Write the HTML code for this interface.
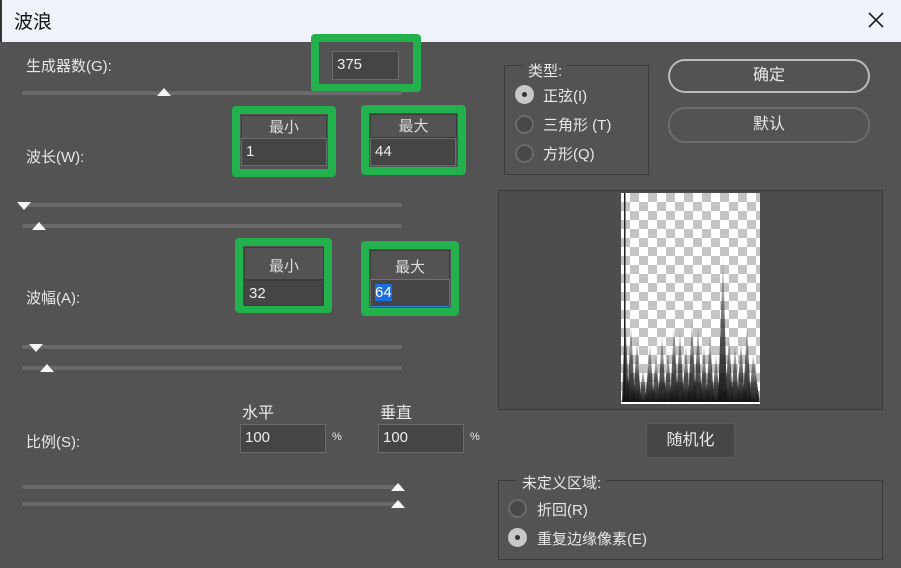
<!DOCTYPE html>
<html><head><meta charset="utf-8"><style>
*{margin:0;padding:0;box-sizing:border-box}
body{width:901px;height:568px;background:#535353;font-family:"Liberation Sans","Noto Sans CJK SC",sans-serif;color:#e8e8e8;font-size:15px;position:relative;overflow:hidden}
.a{position:absolute}
.tb{left:0;top:0;width:901px;height:42px;background:#eff3f9;border-left:2px solid #333}
.g{position:absolute;border:8px solid #22b14c;border-radius:4px}
.in{position:absolute;background:#454545;border:1px solid #6a6a6a;color:#eee;font-size:15px;padding-left:4px;line-height:26px}
.hd{position:absolute;background:#535353;border:1px solid #3c3c3c;text-align:center;font-size:15px;color:#ddd}
.tr{position:absolute;height:4px;background:#6a6a6a;border-radius:2px}
.up{position:absolute;width:0;height:0;border-left:7px solid transparent;border-right:7px solid transparent;border-bottom:8px solid #f5f5f5}
.dn{position:absolute;width:0;height:0;border-left:7px solid transparent;border-right:7px solid transparent;border-top:8px solid #f5f5f5}
.r{position:absolute;width:19px;height:19px;border-radius:50%;background:#484848;border:2px solid #6a6a6a}
.r.on{background:#c8c8c8;border:none}
.r.on:after{content:"";position:absolute;left:7px;top:7px;width:5px;height:5px;border-radius:50%;background:#333}
.box{position:absolute;border:1px solid #3a3a3a}
.btn{position:absolute;border:2px solid #aaa;border-radius:17px;text-align:center;font-size:16px}
</style></head><body>
<div class="a tb"></div>
<div class="a" style="left:14px;top:7px;color:#111;font-size:19px">波浪</div>
<svg class="a" style="left:867px;top:11px" width="18" height="18"><path d="M2 2L16 16M16 2L2 16" stroke="#222" stroke-width="1.6"/></svg>

<div class="a" style="left:26px;top:55px">生成器数(G):</div>
<div class="g" style="left:311px;top:34px;width:110px;height:58px"></div>
<div class="in" style="left:332px;top:51px;width:67px;height:29px">375</div>
<div class="tr" style="left:22px;top:91px;width:380px"></div><div class="up" style="left:157px;top:88px"></div>

<div class="a" style="left:26px;top:146px">波长(W):</div>
<div class="g" style="left:232px;top:106px;width:104px;height:71px"></div>
<div class="hd" style="left:241px;top:115px;width:86px;height:24px">最小</div>
<div class="in" style="left:241px;top:138px;width:86px;height:28px">1</div>
<div class="g" style="left:361px;top:105px;width:105px;height:70px"></div>
<div class="hd" style="left:370px;top:114px;width:87px;height:24px">最大</div>
<div class="in" style="left:370px;top:138px;width:86px;height:28px">44</div>
<div class="tr" style="left:22px;top:203px;width:380px"></div><div class="dn" style="left:17px;top:202px"></div>
<div class="tr" style="left:22px;top:224px;width:380px"></div><div class="up" style="left:32px;top:222px"></div>

<div class="a" style="left:26px;top:287px">波幅(A):</div>
<div class="g" style="left:235px;top:238px;width:97px;height:75px"></div>
<div class="hd" style="left:244px;top:247px;width:80px;height:33px;line-height:38px">最小</div>
<div class="in" style="left:244px;top:280px;width:80px;height:26px;border-color:#3c3c3c">32</div>
<div class="g" style="left:361px;top:241px;width:98px;height:75px"></div>
<div class="hd" style="left:370px;top:250px;width:80px;height:30px;line-height:34px">最大</div>
<div class="in" style="left:370px;top:279px;width:80px;height:28px;border-top:1px solid #2a7fd6;border-bottom:1px solid #2a7fd6"><span style="background:#1a6fe0;color:#fff">64</span></div>
<div class="tr" style="left:22px;top:345px;width:380px"></div><div class="dn" style="left:29px;top:344px"></div>
<div class="tr" style="left:22px;top:366px;width:380px"></div><div class="up" style="left:40px;top:364px"></div>

<div class="a" style="left:242px;top:399px;font-size:16px">水平</div>
<div class="a" style="left:380px;top:399px;font-size:16px">垂直</div>
<div class="a" style="left:26px;top:431px">比例(S):</div>
<div class="in" style="left:240px;top:424px;width:86px;height:29px">100</div>
<div class="a" style="left:332px;top:431px;font-size:11px">%</div>
<div class="in" style="left:378px;top:424px;width:86px;height:29px">100</div>
<div class="a" style="left:470px;top:431px;font-size:11px">%</div>
<div class="tr" style="left:22px;top:485px;width:380px"></div><div class="up" style="left:391px;top:483px"></div>
<div class="tr" style="left:22px;top:502px;width:380px"></div><div class="up" style="left:391px;top:500px"></div>

<div class="box" style="left:504px;top:65px;width:145px;height:110px"></div>
<div class="a" style="left:523px;top:60px;background:#535353;padding:0 5px">类型:</div>
<div class="r on" style="left:515px;top:85px"></div><div class="a" style="left:543px;top:85px">正弦(I)</div>
<div class="r" style="left:515px;top:115px"></div><div class="a" style="left:543px;top:114px">三角形 (T)</div>
<div class="r" style="left:515px;top:144px"></div><div class="a" style="left:543px;top:143px">方形(Q)</div>
<div class="btn" style="left:668px;top:59px;width:202px;height:34px;line-height:30px;border-color:#bbb">确定</div>
<div class="btn" style="left:668px;top:107px;width:202px;height:36px;line-height:32px;border-color:#6c6c6c">默认</div>

<div class="box" style="left:498px;top:190px;width:385px;height:220px;background:#4d4d4d"></div>
<div class="a" style="left:621px;top:193px;width:139px;height:211px;background-color:#fff;background-image:linear-gradient(45deg,#c4c4c4 25%,transparent 25%,transparent 75%,#c4c4c4 75%),linear-gradient(45deg,#c4c4c4 25%,transparent 25%,transparent 75%,#c4c4c4 75%);background-size:18px 18px;background-position:0 0,9px 9px"></div>
<svg class="a" style="left:621px;top:193px" width="139" height="211">
<defs><linearGradient id="s" x1="0" y1="0" x2="0" y2="1"><stop offset="0" stop-color="#222" stop-opacity="0.1"/><stop offset="0.5" stop-color="#222" stop-opacity="0.7"/><stop offset="1" stop-color="#111"/></linearGradient></defs>
<rect x="3" y="0" width="1.5" height="211" fill="#222"/>
<g fill="url(#s)">
<polygon points="1,211 4,115 8,211"/><polygon points="6,211 10,130 14,211"/><polygon points="12,211 16,145 20,211"/><polygon points="18,211 22,175 26,211"/><polygon points="24,211 29,150 33,211"/><polygon points="31,211 35,160 39,211"/><polygon points="37,211 41,140 45,211"/><polygon points="43,211 47,155 51,211"/><polygon points="49,211 53,130 57,211"/><polygon points="55,211 59,135 63,211"/><polygon points="61,211 65,150 69,211"/><polygon points="67,211 71,125 75,211"/><polygon points="73,211 77,130 81,211"/><polygon points="79,211 83,150 87,211"/><polygon points="85,211 89,140 93,211"/><polygon points="91,211 95,160 99,211"/><polygon points="97,211 102,60 106,211"/><polygon points="104,211 108,140 112,211"/><polygon points="110,211 114,150 118,211"/><polygon points="116,211 120,145 124,211"/><polygon points="122,211 126,130 130,211"/><polygon points="128,211 132,160 139,211"/>
</g><rect x="0" y="209" width="139" height="2" fill="#fff"/></svg>

<div class="a" style="left:646px;top:423px;width:89px;height:35px;background:#464646;border:1px solid #5c5c5c;border-radius:3px;text-align:center;line-height:33px;font-size:16px">随机化</div>

<div class="box" style="left:498px;top:480px;width:385px;height:80px"></div>
<div class="a" style="left:517px;top:472px;background:#535353;padding:0 5px">未定义区域:</div>
<div class="r" style="left:508px;top:499px"></div><div class="a" style="left:537px;top:499px">折回(R)</div>
<div class="r on" style="left:508px;top:528px"></div><div class="a" style="left:537px;top:528px">重复边缘像素(E)</div>
</body></html>
